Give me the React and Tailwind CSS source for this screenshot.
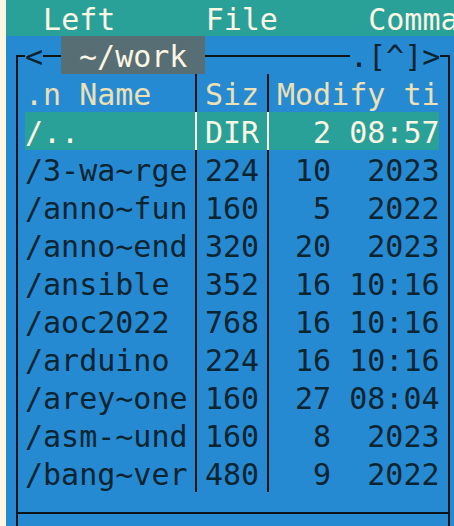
import React from "react";

const rows = [
  { n: "/..", s: "DIR", m: "  2 08:57", sel: true },
  { n: "/3-wa~rge", s: "224", m: " 10  2023" },
  { n: "/anno~fun", s: "160", m: "  5  2022" },
  { n: "/anno~end", s: "320", m: " 20  2023" },
  { n: "/ansible", s: "352", m: " 16 10:16" },
  { n: "/aoc2022", s: "768", m: " 16 10:16" },
  { n: "/arduino", s: "224", m: " 16 10:16" },
  { n: "/arey~one", s: "160", m: " 27 08:04" },
  { n: "/asm-~und", s: "160", m: "  8  2023" },
  { n: "/bang~ver", s: "480", m: "  9  2022" },
];

function Sep({ light }) {
  return (
    <div className="w-[18px] h-full flex justify-center shrink-0">
      <div className={light ? "w-[2px] h-full bg-[#fdf6e3]" : "w-[2px] h-full bg-[#0d1418]"} />
    </div>
  );
}

function Row({ n, s, m, sel, header }) {
  const txt = header ? "text-[#ece0b4]" : sel ? "text-[#fdf6e3]" : "text-[#0a2430]";
  return (
    <div className="h-[38px] flex pl-[7px]">
      <div className={"flex h-full " + (sel ? "bg-[#2aa198] " : "") + txt}>
        <div className="w-[162px] pt-[1.5px] overflow-hidden whitespace-pre">{n}</div>
        <Sep light={sel} />
        <div className="w-[54px] pt-[1.5px] overflow-hidden whitespace-pre">{s}</div>
        <Sep light={sel} />
        <div className="w-[162px] pt-[1.5px] overflow-hidden whitespace-pre">{m}</div>
      </div>
    </div>
  );
}

export default function App() {
  return (
    <div
      className="w-[454px] h-[526px] overflow-hidden flex bg-[#fdf6e3] text-[30px] leading-[38px]"
      style={{ fontFamily: '"DejaVu Sans Mono", monospace' }}
    >
      <div className="w-[6px] shrink-0 bg-[#fdf6e3]" />
      <div className="flex-1 flex flex-col min-w-0">
        <div className="h-[36px] shrink-0 bg-[#2aa198] text-[#fdf6e3] leading-[40px] pl-[1px] whitespace-pre overflow-hidden">
          {"  Left     File     Comma"}
        </div>
        <div className="flex-1 bg-[#268ad2] flex flex-col">
          {/* title row */}
          <div className="h-[38px] flex shrink-0">
            <div className="w-[10px] shrink-0" />
            <div className="w-[9px] shrink-0 flex flex-col">
              <div className="mt-[19px] flex-1 border-l-2 border-t-2 border-[#0d1418]" />
            </div>
            <div className="w-[18px] shrink-0 pt-[1.5px] text-[#0a2430]">{"<"}</div>
            <div className="w-[18px] shrink-0 flex flex-col">
              <div className="mt-[19px] h-[2px] bg-[#0d1418]" />
            </div>
            <div className="w-[144px] shrink-0 pt-[1.5px] bg-[#586e75] text-[#fdf6e3] whitespace-pre">{" ~/work "}</div>
            <div className="flex-1 flex flex-col">
              <div className="mt-[19px] h-[2px] bg-[#0d1418]" />
            </div>
            <div className="w-[90px] shrink-0 pt-[1.5px] text-[#0a2430] whitespace-pre">{".[^]>"}</div>
            <div className="w-[10px] shrink-0 flex flex-col">
              <div className="mt-[19px] flex-1 border-r-2 border-t-2 border-[#0d1418]" />
            </div>
            <div className="w-[4px] shrink-0" />
          </div>
          {/* body */}
          <div className="flex-1 ml-[10px] mr-[4px] border-x-2 border-[#0d1418] flex flex-col">
            <Row n=".n Name" s="Siz" m="Modify ti" header />
            {rows.map((r) => (
              <Row key={r.n} {...r} />
            ))}
            <div className="h-[20px] shrink-0" />
            <div className="h-[2px] bg-[#0d1418] shrink-0" />
          </div>
        </div>
      </div>
    </div>
  );
}
